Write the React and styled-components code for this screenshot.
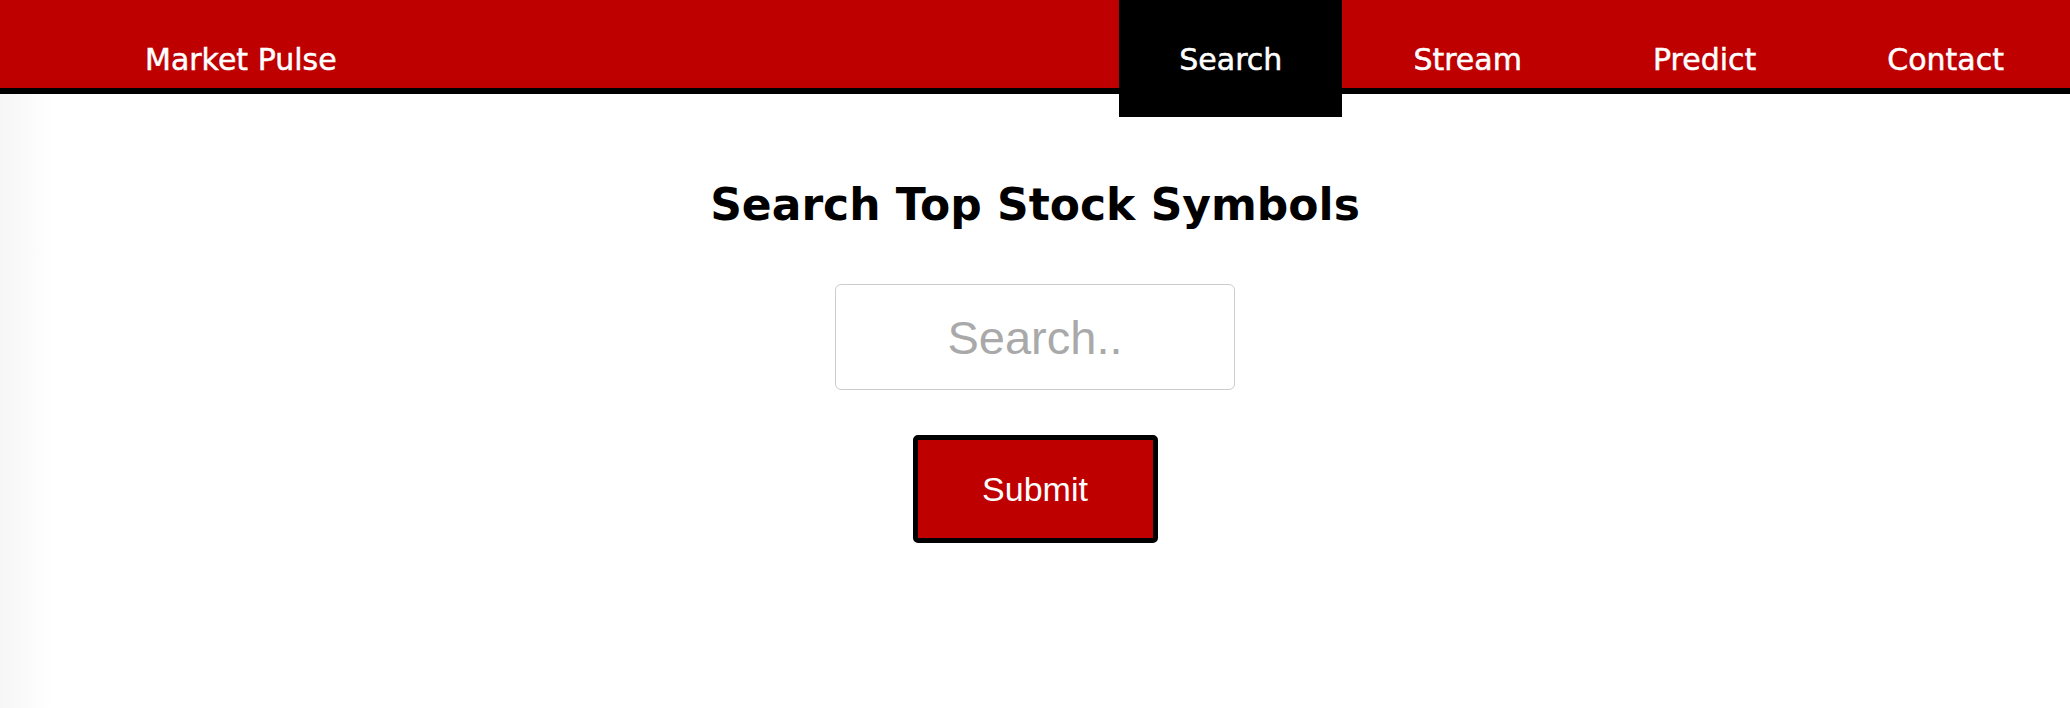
import React, { useState } from "react";
import styled, { createGlobalStyle } from "styled-components";

const GlobalStyle = createGlobalStyle`
  html, body {
    margin: 0;
    padding: 0;
  }
  body {
    min-height: 708px;
    background: linear-gradient(to right, #f6f6f6 0px, #fbfbfb 30px, #ffffff 52px);
    font-family: "DejaVu Sans", Verdana, sans-serif;
  }
`;

const Header = styled.header`
  display: flex;
  align-items: flex-start;
  height: 88px;
  background: #bf0000;
  border-bottom: 6px solid #000;
`;

const Brand = styled.div`
  padding: 42px 0 0 145px;
  color: #fff;
  font-size: 30px;
  line-height: normal;
  -webkit-text-stroke: 0.5px #fff;
`;

const Nav = styled.nav`
  display: flex;
  gap: 11px;
  margin-left: auto;
  padding-right: 6px;
`;

const NavItem = styled.a`
  box-sizing: border-box;
  display: block;
  height: ${(p) => (p.$active ? "117px" : "88px")};
  padding: 42px 60px 0;
  color: #fff;
  font-size: 30px;
  line-height: normal;
  text-decoration: none;
  -webkit-text-stroke: 0.5px #fff;
  background: ${(p) => (p.$active ? "#000" : "transparent")};
  cursor: pointer;
`;

const Main = styled.main`
  display: flex;
  flex-direction: column;
  align-items: center;
`;

const Title = styled.h1`
  margin: 85px 0 0;
  font-family: "DejaVu Sans", Verdana, sans-serif;
  font-size: 44px;
  font-weight: bold;
  line-height: normal;
  color: #000;
`;

const Form = styled.form`
  display: flex;
  flex-direction: column;
  align-items: center;
  margin-top: 54px;
`;

const SearchInput = styled.input`
  box-sizing: border-box;
  width: 400px;
  height: 106px;
  border: 1px solid #cccccc;
  border-radius: 6px;
  outline: none;
  background: #fff;
  text-align: center;
  font-family: "Liberation Sans", Arial, sans-serif;
  font-size: 47px;
  color: #333;

  &::placeholder {
    color: #a9a9a9;
  }
`;

const SubmitButton = styled.button`
  box-sizing: border-box;
  width: 245px;
  height: 108px;
  margin-top: 45px;
  border: 5px solid #000;
  border-radius: 5px;
  background: #bf0000;
  color: #fff;
  font-family: "Liberation Sans", Arial, sans-serif;
  font-size: 34px;
  cursor: pointer;
`;

const links = ["Search", "Stream", "Predict", "Contact"];

const App = () => {
  const [query, setQuery] = useState("");
  const active = "Search";

  const handleSubmit = (e) => {
    e.preventDefault();
  };

  return (
    <>
      <GlobalStyle />
      <Header>
        <Brand>Market Pulse</Brand>
        <Nav>
          {links.map((item) => (
            <NavItem key={item} $active={item === active}>
              {item}
            </NavItem>
          ))}
        </Nav>
      </Header>
      <Main>
        <Title>Search Top Stock Symbols</Title>
        <Form onSubmit={handleSubmit}>
          <SearchInput
            type="text"
            placeholder="Search.."
            value={query}
            onChange={(e) => setQuery(e.target.value)}
          />
          <SubmitButton type="submit">Submit</SubmitButton>
        </Form>
      </Main>
    </>
  );
};

export default App;
